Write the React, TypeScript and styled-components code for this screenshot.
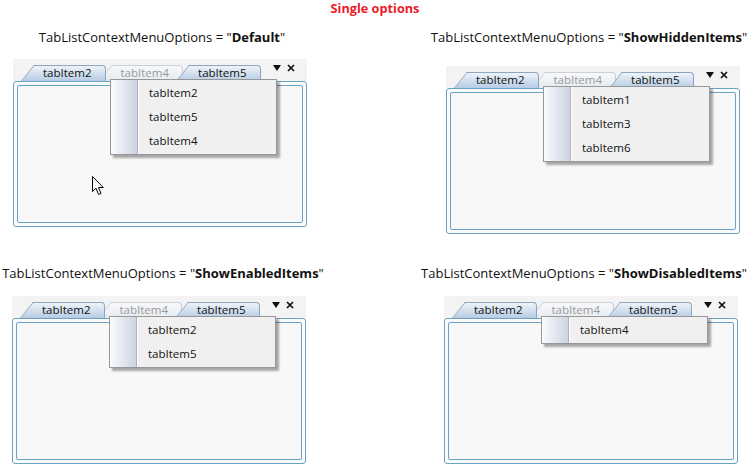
import React from "react";
import styled, { createGlobalStyle } from "styled-components";

const GlobalStyle = createGlobalStyle`
  html, body {
    margin: 0;
    padding: 0;
    background: #fff;
  }
  body {
    font-family: "Open Sans", "Noto Sans", sans-serif;
    color: #000;
  }
`;

const Page = styled.div`
  width: 750px;
  height: 466px;
  overflow: hidden;
`;

const Heading = styled.div`
  height: 17px;
  line-height: 17px;
  text-align: center;
  color: #ec1c2a;
  font-size: 12.7px;
  font-weight: 700;
`;

const Grid = styled.div`
  display: grid;
  grid-template-columns: 375px 375px;
  row-gap: 30px;
  margin-top: 11px;
`;

const Cell = styled.div`
  display: flex;
  flex-direction: column;
  align-items: flex-start;
`;

const Caption = styled.div<{ $left: number; $right: number }>`
  box-sizing: border-box;
  width: 100%;
  padding: 0 ${(p) => p.$right}px 0 ${(p) => p.$left}px;
  height: 18px;
  line-height: 18px;
  text-align: center;
  white-space: nowrap;
  font-size: 13px;
  color: #111;

  b {
    font-weight: 700;
  }
`;

const Panel = styled.div<{ $x: number; $y: number }>`
  position: relative;
  width: 294px;
  margin: ${(p) => p.$y}px 0 0 ${(p) => p.$x}px;
`;

const Header = styled.div`
  display: flex;
  align-items: flex-end;
  height: 22px;
  padding-left: 8px;
  background: #f3f3f3;
`;

const TabRow = styled.div`
  display: flex;
  align-items: flex-end;
  flex: 1;
`;

const Tab = styled.div<{ $disabled?: boolean; $first?: boolean }>`
  position: relative;
  isolation: isolate;
  z-index: ${(p) => (p.$first ? 3 : 1)};
  height: 16px;
  line-height: 16px;
  padding: 0 14px 0 22px;
  margin-left: ${(p) => (p.$first ? 0 : -7)}px;
  font-size: 11.5px;
  color: ${(p) => (p.$disabled ? "#9a9a9a" : "#111")};

  &::before {
    content: "";
    position: absolute;
    z-index: -1;
    left: 13px;
    right: 0;
    top: 0;
    bottom: 0;
    border: 1px solid ${(p) => (p.$disabled ? "#c9d0d8" : "#8ea6c0")};
    border-left: none;
    border-bottom: none;
    border-top-right-radius: 4px;
    background: ${(p) =>
      p.$disabled
        ? "linear-gradient(#f7f8fa, #e6ebf0)"
        : "linear-gradient(#eef3f9, #b6cce4)"};
  }

  &::after {
    content: "";
    position: absolute;
    z-index: -1;
    left: 0;
    width: 22px;
    top: 0;
    bottom: 0;
    border-left: 1px solid ${(p) => (p.$disabled ? "#c9d0d8" : "#8ea6c0")};
    border-top: 1px solid ${(p) => (p.$disabled ? "#c9d0d8" : "#8ea6c0")};
    background: ${(p) =>
      p.$disabled
        ? "linear-gradient(#f7f8fa, #e6ebf0)"
        : "linear-gradient(#eef3f9, #b6cce4)"};
    transform-origin: bottom left;
    transform: skewX(-39deg);
  }
`;

const Controls = styled.div`
  display: flex;
  align-items: center;
  gap: 6px;
  height: 22px;
  padding: 0 12px 5px 0;
  box-sizing: border-box;
`;

const Frame = styled.div`
  box-sizing: border-box;
  height: 146px;
  padding: 3px;
  border: 1px solid #6aa3c4;
  border-radius: 3px;
  background: #fbfbfb;
`;

const Inner = styled.div`
  position: relative;
  box-sizing: border-box;
  height: 100%;
  border: 1px solid #6aa3c4;
  border-radius: 2px;
  background: #f8f8f8;
`;

const Menu = styled.div`
  position: absolute;
  z-index: 5;
  left: 97px;
  top: 20px;
  width: 167px;
  box-sizing: border-box;
  display: flex;
  border: 1px solid #979797;
  background: #f0f0f0;
  box-shadow: 3px 3px 2px rgba(0, 0, 0, 0.33);
`;

const Gutter = styled.div`
  width: 26px;
  background: linear-gradient(to right, #fbfbfd, #cdd3e2);
  border-right: 1px solid #a9b1c2;
  box-shadow: 1px 0 0 #ffffff;
`;

const ItemList = styled.div`
  display: flex;
  flex-direction: column;
  padding: 1px 0;
  flex: 1;
`;

const Item = styled.div`
  height: 24px;
  line-height: 24px;
  padding-left: 11px;
  font-size: 11.5px;
  color: #111;
`;

const Cursor = styled.svg`
  position: absolute;
  left: 74px;
  top: 90px;
`;

type PanelConfig = {
  option: string;
  captionLeft: number;
  captionRight: number;
  x: number;
  y: number;
  items: string[];
  cursor?: boolean;
};

const panels: PanelConfig[] = [
  { option: "Default", captionLeft: 0, captionRight: 51, x: 13, y: 13, items: ["tabItem2", "tabItem5", "tabItem4"], cursor: true },
  { option: "ShowHiddenItems", captionLeft: 53, captionRight: 0, x: 71, y: 20, items: ["tabItem1", "tabItem3", "tabItem6"] },
  { option: "ShowEnabledItems", captionLeft: 0, captionRight: 49, x: 12, y: 14, items: ["tabItem2", "tabItem5"] },
  { option: "ShowDisabledItems", captionLeft: 43, captionRight: 0, x: 69, y: 14, items: ["tabItem4"] },
];

const DropArrow = () => (
  <svg width="8" height="6" viewBox="0 0 8 6">
    <path d="M0 0 H8 L4 6 Z" fill="#111" />
  </svg>
);

const CloseIcon = () => (
  <svg width="8" height="8" viewBox="0 0 8 8">
    <path d="M1 1 L7 7 M7 1 L1 7" stroke="#111" strokeWidth="1.7" />
  </svg>
);

const TabPanel = ({ cfg }: { cfg: PanelConfig }) => (
  <Cell>
    <Caption $left={cfg.captionLeft} $right={cfg.captionRight}>
      TabListContextMenuOptions = "<b>{cfg.option}</b>"
    </Caption>
    <Panel $x={cfg.x} $y={cfg.y}>
      <Header>
        <TabRow>
          <Tab $first>tabItem2</Tab>
          <Tab $disabled>tabItem4</Tab>
          <Tab>tabItem5</Tab>
        </TabRow>
        <Controls>
          <DropArrow />
          <CloseIcon />
        </Controls>
      </Header>
      <Frame>
        <Inner>
          {cfg.cursor && (
            <Cursor width="13" height="20" viewBox="0 0 13 20">
              <path
                d="M0.5 0.5 L0.5 15.5 L4 12.2 L6.6 18.5 L9 17.5 L6.5 11.5 L11.3 11.5 Z"
                fill="#fff"
                stroke="#000"
                strokeWidth="1"
                strokeLinejoin="round"
              />
            </Cursor>
          )}
        </Inner>
      </Frame>
      <Menu>
        <Gutter />
        <ItemList>
          {cfg.items.map((it) => (
            <Item key={it}>{it}</Item>
          ))}
        </ItemList>
      </Menu>
    </Panel>
  </Cell>
);

export default function App() {
  return (
    <Page>
      <GlobalStyle />
      <Heading>Single options</Heading>
      <Grid>
        {panels.map((p) => (
          <TabPanel key={p.option} cfg={p} />
        ))}
      </Grid>
    </Page>
  );
}
